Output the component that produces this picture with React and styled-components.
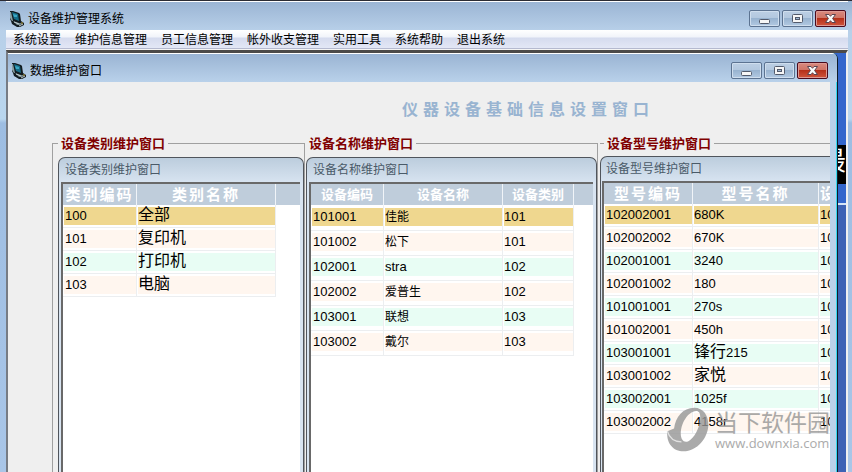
import React from 'react';
import styled, { createGlobalStyle } from 'styled-components';

const GlobalStyle = createGlobalStyle`
  * {
    box-sizing: border-box;
  }

  body {
    margin: 0;
    background: #b9d1ea;
    color: #000;
    font-family: "Liberation Sans", "Noto Sans CJK SC", sans-serif;
    font-size: 12px;
  }
`;

const AppWindow = styled.div`
  position: relative;
  display: flex;
  flex-direction: column;
  height: 100vh;
  overflow: hidden;
  padding: 0 4px 0 6px;
  border-top: 1px solid #2b2b33;
  background: linear-gradient(#9ab4d3 0, #b8d0e9 30px, #b9d6ee 118px, #9dbde2 122px, #a9c6e8 100%);
`;

const TitleBar = styled.header`
  display: flex;
  flex: none;
  align-items: center;
  justify-content: space-between;
  height: 29px;
  padding: 5px 2px 0 3px;
  border-top: 1px solid #fff;
`;

const ChildTitleBar = styled(TitleBar)`
  padding: 5px 9px 0 3px;
  background: linear-gradient(#9ab4d3, #b9d1ea);
`;

const Caption = styled.h1`
  display: flex;
  align-items: center;
  gap: 3px;
  margin: 0;
  font-size: 12px;
  font-weight: normal;
  line-height: 16px;
`;

const Controls = styled.div`
  display: flex;
  gap: 2px;
`;

const ControlButton = styled.button`
  display: flex;
  align-items: center;
  justify-content: center;
  width: 31px;
  height: 17px;
  padding: 0;
  border: 1px solid ${props => (props.$close ? '#4b0a1c' : '#5c7391')};
  border-radius: 2px;
  box-shadow: inset 0 0 0 1px ${props => (props.$close ? '#dd9a94' : '#cfdeee')};
  background: ${props => (props.$close
    ? 'linear-gradient(#d98a7f 0, #cf7466 45%, #b5301a 50%, #d0553c 100%)'
    : 'linear-gradient(#bccfe4 0, #b3c8df 45%, #98b3d0 50%, #b2c9e2 100%)')};
`;

const MenuBar = styled.nav`
  display: flex;
  flex: none;
  gap: 14px;
  height: 20px;
  padding: 0 7px;
  background: linear-gradient(#fff 0, #f1f4fa 7px, #d5dbee 8px, #e3e7f6 18px, #b5b9cf 18px, #b5b9cf 19px, #f4f4f4 19px);
`;

const MenuItem = styled.button`
  padding: 0;
  border: 0;
  background: none;
  color: #000;
  font: inherit;
  line-height: 20px;
`;

const Client = styled.main`
  display: flex;
  flex: 1;
  min-height: 0;
  border: 2px solid #6e6e6e;
  border-top-width: 3px;
  border-top-color: #4c4a48;
  border-right-color: #f0f0f0;
  border-bottom: 0;
  border-left-color: #777c84;
  background: linear-gradient(#3366cc 0, #3366cc 150px, #3d62b5 152px);
`;

const ChildWindow = styled.section`
  display: flex;
  flex: 1;
  flex-direction: column;
  min-width: 0;
  border-right: 1px solid #101c28;
  border-radius: 0 6px 0 0;
  box-shadow: inset -1px 0 0 #34d8f0;
  background: #b9d1ea;
  overflow: hidden;
`;

const ChildBody = styled.div`
  display: flex;
  flex: 1;
  flex-direction: column;
  min-height: 0;
  margin-right: 7px;
  background: #efefef;
  overflow: hidden;
`;

const PageTitle = styled.h2`
  margin: 17px 0 15px 218px;
  color: #99b4d1;
  font-size: 16px;
  font-weight: bold;
  letter-spacing: 5px;
  line-height: 22px;
  text-align: center;
  white-space: nowrap;
`;

const Groups = styled.div`
  display: grid;
  flex: 1;
  grid-template-columns: 253fr 293fr 232fr;
  min-height: 0;
  padding-left: 44px;
`;

const Group = styled.fieldset`
  display: flex;
  flex-direction: column;
  min-width: 0;
  min-height: 0;
  margin: 0 0 0 ${props => (props.$first ? 0 : props.$open ? 2 : 1)}px;
  padding: ${props => (props.$open ? 5 : 6)}px 0 0 ${props => (props.$first ? 5 : 0)}px;
  border: 1px solid #a0a0a0;
  border-bottom: 0;
  border-right-width: ${props => (props.$open ? 0 : 1)}px;
  border-left-width: ${props => (props.$first ? 1 : 0)}px;
`;

const GroupTitle = styled.legend`
  margin-left: ${props => (props.$open ? 4 : 0)}px;
  padding: 0 3px;
  color: #800000;
  font-size: 13px;
  font-weight: bold;
  line-height: 15px;
  white-space: nowrap;
`;

const Card = styled.section`
  display: flex;
  flex: 1;
  flex-direction: column;
  min-width: 0;
  border: 1px solid #50555c;
  border-bottom: 0;
  border-right-width: ${props => (props.$open ? 0 : 1)}px;
  border-radius: 7px ${props => (props.$open ? 0 : 7)}px 0 0;
  padding: 0 ${props => (props.$open ? 0 : 3)}px 0 ${props => (props.$open ? 1 : 2)}px;
  background: linear-gradient(#bccddd, #d8e4f1 25px);
  overflow: hidden;
`;

const CardTitle = styled.h3`
  margin: 0;
  padding-left: 4px;
  color: #4a5a68;
  font-size: 12px;
  font-weight: normal;
  line-height: 24px;
  white-space: nowrap;
`;

const Sheet = styled.div`
  flex: 1;
  border-top: 2px solid #696969;
  border-left: 2px solid #696969;
  background: linear-gradient(#bfcddb 21px, #fff 21px);
  overflow: hidden;
`;

const Table = styled.table`
  border-collapse: separate;
  border-spacing: 0;
  table-layout: fixed;
  width: ${props => props.$width}px;
`;

const HeadCell = styled.th`
  height: ${props => (props.$large ? 21 : 22)}px;
  padding: 0;
  border-right: 1px solid #f0f4f8;
  color: #fff;
  font-size: ${props => (props.$large ? 15 : 13)}px;
  letter-spacing: ${props => (props.$large ? 2 : 0)}px;
  line-height: 21px;
  vertical-align: top;
  white-space: nowrap;
  overflow: hidden;
`;

const Cell = styled.td`
  height: ${props => props.$height}px;
  padding: 2px 0 ${props => props.$height - 21}px 1px;
  border-right: 1px solid #eceef0;
  border-bottom: 1px solid #eceef0;
  background: #fff;
  vertical-align: top;
  white-space: nowrap;
  overflow: hidden;
`;

const Fill = styled.div`
  height: 18px;
  background: ${props => props.$color};
  font-size: 13px;
  line-height: 17px;
  text-indent: ${props => (props.$indent ? 1 : 0)}px;
`;

const Han = styled.span`
  font-size: ${props => (props.$large ? 16 : 12)}px;
  line-height: 16px;
`;

const Wallpaper = styled.aside`
  width: 8px;
  padding-top: 92px;
  overflow: hidden;
`;

const Banner = styled.div`
  display: flex;
  justify-content: flex-end;
  height: 39px;
  margin-bottom: 19px;
  background: #000;
  color: #fff;
  font-size: 26px;
  line-height: 32px;
`;

const BannerLine = styled.div`
  height: 2px;
  background: #d5e4f7;
`;

const Watermark = styled.div`
  position: absolute;
  right: 22px;
  bottom: 20px;
  display: flex;
  align-items: center;
  gap: 6px;
  color: #969696;
  opacity: 0.8;
  pointer-events: none;
`;

const WatermarkText = styled.div`
  display: flex;
  flex-direction: column;
  font-size: 23px;
  line-height: 26px;
`;

const WatermarkLink = styled.span`
  font-family: "Open Sans", sans-serif;
  font-size: 13px;
  line-height: 14px;
`;

const menuItems = ['系统设置', '维护信息管理', '员工信息管理', '帐外收支管理', '实用工具', '系统帮助', '退出系统'];

const categories = {
  large: true,
  width: 213,
  rowHeight: 23,
  columns: [['类别编码', 74], ['类别名称', 139]],
  rows: [['100', '全部'], ['101', '复印机'], ['102', '打印机'], ['103', '电脑']],
};

const devices = {
  width: 263,
  rowHeight: 25,
  columns: [['设备编码', 73], ['设备名称', 119], ['设备类别', 71]],
  rows: [
    ['101001', '佳能', '101'],
    ['101002', '松下', '101'],
    ['102001', 'stra', '102'],
    ['102002', '爱普生', '102'],
    ['103001', '联想', '103'],
    ['103002', '戴尔', '103'],
  ],
};

const models = {
  large: true,
  width: 235,
  rowHeight: 23,
  columns: [['型号编码', 89], ['型号名称', 126], ['设', 20]],
  rows: [
    ['102002001', '680K', '102'],
    ['102002002', '670K', '102'],
    ['102001001', '3240', '102'],
    ['102001002', '180', '102'],
    ['101001001', '270s', '101'],
    ['101002001', '450h', '101'],
    ['103001001', '锋行215', '103'],
    ['103001002', '家悦', '103'],
    ['103002001', '1025f', '103'],
    ['103002002', '4158r', '103'],
  ],
};

const rowColor = index => {
  if (index === 0) return '#efd78f';
  return index % 2 ? '#fff6ef' : '#e8fdf4';
};

const CellText = ({ text, large }) => {
  const [, han, rest] = text.match(/^([\u4e00-\u9fff]*)(.*)$/);
  return (
    <>
      {han && <Han $large={large}>{han}</Han>}
      {rest}
    </>
  );
};

const ComputerIcon = () => (
  <svg width="16" height="16" viewBox="0 0 16 16" aria-hidden="true">
    <path d="M1 0 H4 L10 2 L11 3 L12 10 L15 12 V14 L11 16 H8 L3 13 L2 10 L1 8 Z" fill="#121b20" />
    <path d="M1 1 H2 L4 10 L3 10 L1 7 Z" fill="#8aa0a4" />
    <path d="M3 1 L9 3 L10 10 L5 8 Z" fill="#176d88" />
    <path d="M4 3 L8 4 L8 6 L5 6 Z" fill="#3aa6c2" />
    <path d="M4 10 L10 12 L13 12 L11 14 L8 14 Z" fill="#70858a" />
    <path d="M5 11 L10 13 M10 15 L14 13" stroke="#c3cdce" strokeWidth="1" />
    <path d="M12 12 H14" stroke="#b39a36" strokeWidth="1" />
  </svg>
);

const WindowControls = () => (
  <Controls>
    <ControlButton type="button" aria-label="最小化">
      <svg width="13" height="13" viewBox="0 0 13 13">
        <rect x="1.5" y="7.5" width="10" height="4" rx="1" fill="#f6f6f6" stroke="#525a6b" />
      </svg>
    </ControlButton>
    <ControlButton type="button" aria-label="最大化">
      <svg width="13" height="13" viewBox="0 0 13 13">
        <rect x="1.5" y="2.5" width="10" height="8" rx="1" fill="#f6f6f6" stroke="#525a6b" />
        <rect x="4.5" y="5.5" width="4" height="2" fill="#9fb8d4" stroke="#525a6b" />
      </svg>
    </ControlButton>
    <ControlButton type="button" aria-label="关闭" $close>
      <svg width="13" height="13" viewBox="0 0 13 13">
        <path
          d="M1.5 2.5 H5 L6.5 4.3 L8 2.5 H11.5 L8.6 6.5 L11.5 10.5 H8 L6.5 8.7 L5 10.5 H1.5 L4.4 6.5 Z"
          fill="#fafafa"
          stroke="#5a4450"
        />
      </svg>
    </ControlButton>
  </Controls>
);

const DataTable = ({ data, label }) => (
  <Table $width={data.width} aria-label={label}>
    <colgroup>
      {data.columns.map(([name, width]) => <col key={name} width={width} />)}
    </colgroup>
    <thead>
      <tr>
        {data.columns.map(([name]) => <HeadCell key={name} scope="col" $large={data.large}>{name}</HeadCell>)}
      </tr>
    </thead>
    <tbody>
      {data.rows.map((row, index) => (
        <tr key={row[0]}>
          {row.map((text, column) => (
            <Cell key={column} $height={data.rowHeight}>
              <Fill $color={rowColor(index)} $indent={column === 0}>
                <CellText text={text} large={data.large} />
              </Fill>
            </Cell>
          ))}
        </tr>
      ))}
    </tbody>
  </Table>
);

const Panel = ({ title, data, first, open }) => (
  <Group $first={first} $open={open}>
    <GroupTitle $open={open}>{title}</GroupTitle>
    <Card $open={open}>
      <CardTitle>{title}</CardTitle>
      <Sheet>
        <DataTable data={data} label={title} />
      </Sheet>
    </Card>
  </Group>
);

const App = () => (
  <>
    <GlobalStyle />
    <AppWindow>
      <TitleBar>
        <Caption><ComputerIcon />设备维护管理系统</Caption>
        <WindowControls />
      </TitleBar>
      <MenuBar>
        {menuItems.map(item => <MenuItem type="button" key={item}>{item}</MenuItem>)}
      </MenuBar>
      <Client>
        <ChildWindow>
          <ChildTitleBar as="div">
            <Caption as="h2"><ComputerIcon />数据维护窗口</Caption>
            <WindowControls />
          </ChildTitleBar>
          <ChildBody>
            <PageTitle>仪器设备基础信息设置窗口</PageTitle>
            <Groups>
              <Panel title="设备类别维护窗口" data={categories} first />
              <Panel title="设备名称维护窗口" data={devices} />
              <Panel title="设备型号维护窗口" data={models} open />
            </Groups>
          </ChildBody>
        </ChildWindow>
        <Wallpaper>
          <Banner>最</Banner>
          <BannerLine />
        </Wallpaper>
      </Client>
      <Watermark>
        <svg width="43" height="45" viewBox="20 20 128 134" aria-hidden="true">
          <path
            fillRule="evenodd"
            fill="#969696"
            d="M24 92 L44 84 C48 50 70 22 104 22 C132 22 146 46 146 72 C146 112 112 152 72 152 C42 152 20 128 24 92 Z M110 32 C84 34 64 70 64 100 C64 122 78 130 92 118 C112 102 122 72 122 52 C122 38 118 32 110 32 Z"
          />
          <path d="M24 92 C30 112 46 124 66 124" fill="none" stroke="#dcdcdc" strokeWidth="4" />
        </svg>
        <WatermarkText>
          当下软件园
          <WatermarkLink>www.downxia.com</WatermarkLink>
        </WatermarkText>
      </Watermark>
    </AppWindow>
  </>
);

export default App;
